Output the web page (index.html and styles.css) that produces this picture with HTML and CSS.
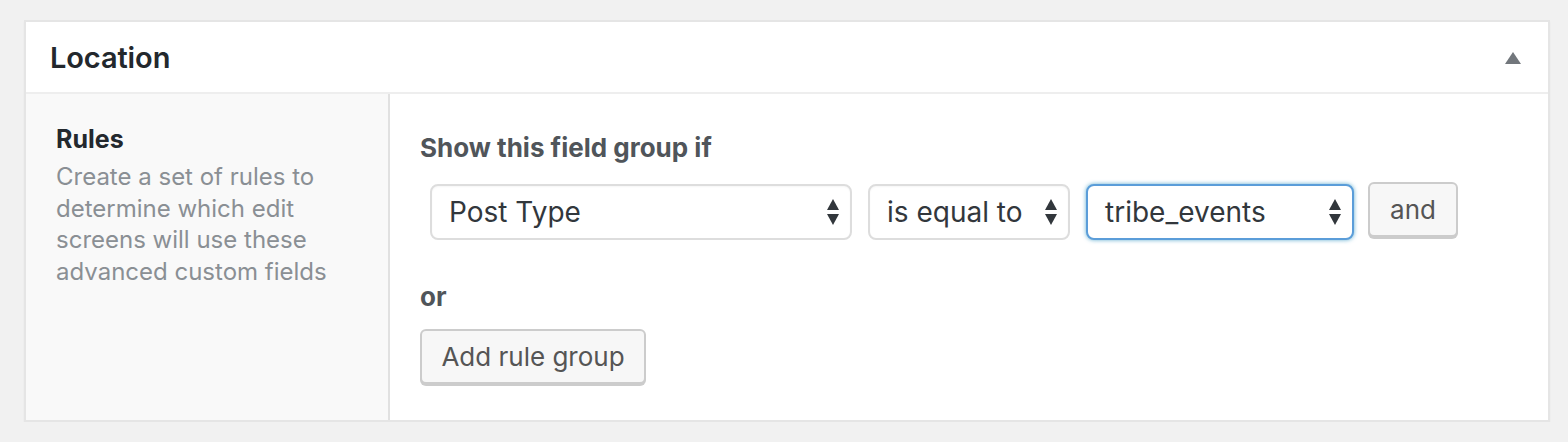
FILE: index.html
```html
<!DOCTYPE html>
<html lang="en">
<head>
<meta charset="utf-8">
<title>Location</title>
<link rel="stylesheet" href="styles.css">
</head>
<body>
<div class="postbox">
  <div class="postbox-header">
    <h2 class="hndle">Location</h2>
    <svg class="toggle" width="16" height="12" viewBox="0 0 16 12" aria-hidden="true"><polygon points="0,12 8,0 16,12" fill="#72777c"/></svg>
  </div>
  <div class="postbox-body">
    <div class="label-col">
      <div class="label">Rules</div>
      <p class="description">Create a set of rules to determine which edit screens will use these advanced custom fields</p>
    </div>
    <div class="input-col">
      <h4 class="group-title">Show this field group if</h4>
      <div class="rule-row">
        <div class="select select-param"><span class="select-text">Post Type</span><svg class="arrows" width="12" height="26" viewBox="0 0 12 26" aria-hidden="true"><polygon points="0,11 6,0 12,11" /><polygon points="0,15 6,26 12,15" /></svg></div>
        <div class="select select-op"><span class="select-text">is equal to</span><svg class="arrows" width="12" height="26" viewBox="0 0 12 26" aria-hidden="true"><polygon points="0,11 6,0 12,11" /><polygon points="0,15 6,26 12,15" /></svg></div>
        <div class="select select-value is-focused"><span class="select-text">tribe_events</span><svg class="arrows" width="12" height="26" viewBox="0 0 12 26" aria-hidden="true"><polygon points="0,11 6,0 12,11" /><polygon points="0,15 6,26 12,15" /></svg></div>
        <button class="button button-and" type="button">and</button>
      </div>
      <h4 class="or-title">or</h4>
      <button class="button button-group" type="button">Add rule group</button>
    </div>
  </div>
</div>
</body>
</html>
```

FILE: styles.css
```css
html, body {
  margin: 0;
  padding: 0;
  background: #f1f1f1;
}

body {
  font-family: Inter, "Noto Sans", "DejaVu Sans", sans-serif;
  padding: 20px 18px 0 24px;
}

.postbox {
  width: 1522px;
  background: #fff;
  border: 2px solid #e5e5e5;
  box-shadow: 0 2px 2px rgba(0, 0, 0, 0.04);
}

.postbox-header {
  height: 70px;
  display: flex;
  align-items: center;
  justify-content: space-between;
  padding: 0 27px 0 24px;
  border-bottom: 2px solid #eeeeee;
}

.hndle {
  margin: 0;
  font-size: 29px;
  font-weight: 600;
  color: #23282d;
  letter-spacing: -0.1px;
}

.toggle {
  display: block;
  margin-top: 1px;
}

.postbox-body {
  display: flex;
  min-height: 326px;
}

.label-col {
  width: 302px;
  flex: 0 0 auto;
  padding: 29px 30px 0 30px;
  background: #f9f9f9;
  border-right: 2px solid #e1e1e1;
}

.label {
  font-size: 25px;
  line-height: 32px;
  font-weight: 700;
  color: #23282d;
}

.description {
  margin: 6px 0 0;
  font-size: 24px;
  line-height: 31.7px;
  color: #8a8f94;
}

.input-col {
  flex: 1 1 auto;
  padding: 34px 30px 0 30px;
}

.group-title,
.or-title {
  margin: 0;
  font-size: 26px;
  line-height: 40px;
  font-weight: 700;
  color: #50555a;
}

.rule-row {
  display: flex;
  align-items: flex-start;
  margin-top: 16px;
  padding-left: 10px;
}

.select {
  box-sizing: border-box;
  height: 56px;
  display: flex;
  align-items: center;
  justify-content: space-between;
  padding: 0 11px 0 17px;
  background: #fff;
  border: 2px solid #dddddd;
  border-radius: 8px;
  box-shadow: inset 0 1px 2px rgba(0, 0, 0, 0.04);
  color: #32373c;
  font-size: 28px;
}

.select-text {
  white-space: nowrap;
}

.arrows {
  display: block;
  fill: #32373c;
}

.select-param {
  width: 422px;
}

.select-op {
  width: 202px;
  margin-left: 16px;
}

.select-value {
  width: 268px;
  margin-left: 16px;
}

.select.is-focused {
  border-color: #5b9dd9;
  box-shadow: 0 0 4px rgba(30, 140, 190, 0.7);
}

.button {
  box-sizing: border-box;
  height: 55px;
  padding: 0;
  background: #f7f7f7;
  border: 2px solid #cccccc;
  border-radius: 6px;
  box-shadow: 0 2px 0 #cccccc;
  color: #555555;
  font-family: inherit;
  font-size: 26px;
  white-space: nowrap;
  text-align: center;
  cursor: pointer;
}

.button-and {
  width: 90px;
  margin-left: 14px;
  margin-top: -2px;
}

.or-title {
  margin-top: 37px;
}

.button-group {
  display: block;
  width: 226px;
  margin-top: 12px;
}
```
